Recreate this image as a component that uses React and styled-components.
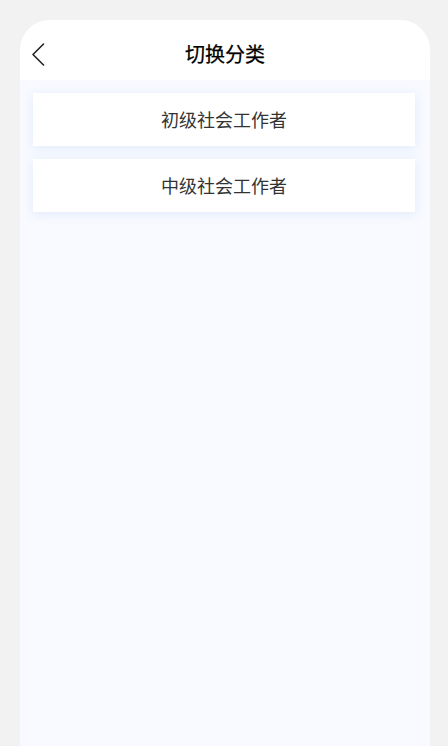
import React from "react";
import styled, { createGlobalStyle } from "styled-components";

const Global = createGlobalStyle`
  html, body { margin: 0; padding: 0; background: #f2f2f2; }
  body { font-family: "Noto Sans CJK SC", "Noto Sans", sans-serif; }
  * { box-sizing: border-box; }
`;

const Page = styled.div`
  width: 448px;
  height: 746px;
  padding: 20px 18px 0 20px;
  background: #f2f2f2;
  overflow: hidden;
`;

const Phone = styled.div`
  height: 100%;
  border-radius: 30px 30px 0 0;
  background: #f8faff;
  overflow: hidden;
  display: flex;
  flex-direction: column;
`;

const Header = styled.div`
  height: 60px;
  padding-top: 8px;
  background: #ffffff;
  display: grid;
  grid-template-columns: 60px 1fr 60px;
  align-items: center;
`;

const Back = styled.button`
  border: none;
  background: none;
  padding: 0 0 0 11px;
  height: 100%;
  display: flex;
  align-items: center;
  cursor: pointer;
`;

const Title = styled.h1`
  margin: 0;
  text-align: center;
  font-size: 20px;
  font-weight: 400;
  color: #000;
  line-height: 1;
  -webkit-text-stroke: 0.25px #000;
`;

const List = styled.div`
  display: flex;
  flex-direction: column;
  gap: 13px;
  padding: 13px 15px 0 13px;
`;

const Item = styled.div`
  height: 53px;
  background: #ffffff;
  display: flex;
  align-items: center;
  justify-content: center;
  font-size: 18px;
  color: #333;
  box-shadow: 0 2px 10px rgba(200, 215, 245, 0.45);
  padding-bottom: 1px;
`;

const items = ["初级社会工作者", "中级社会工作者"];

export default function App() {
  return (
    <>
      <Global />
      <Page>
        <Phone>
          <Header>
            <Back aria-label="返回">
              <svg width="14" height="24" viewBox="0 0 14 24" fill="none">
                <path d="M12.5 2 L2 12.5 L12.5 23" stroke="#222" strokeWidth="1.6" strokeLinecap="round" strokeLinejoin="round" />
              </svg>
            </Back>
            <Title>切换分类</Title>
            <span />
          </Header>
          <List>
            {items.map((t) => (
              <Item key={t}>{t}</Item>
            ))}
          </List>
        </Phone>
      </Page>
    </>
  );
}
